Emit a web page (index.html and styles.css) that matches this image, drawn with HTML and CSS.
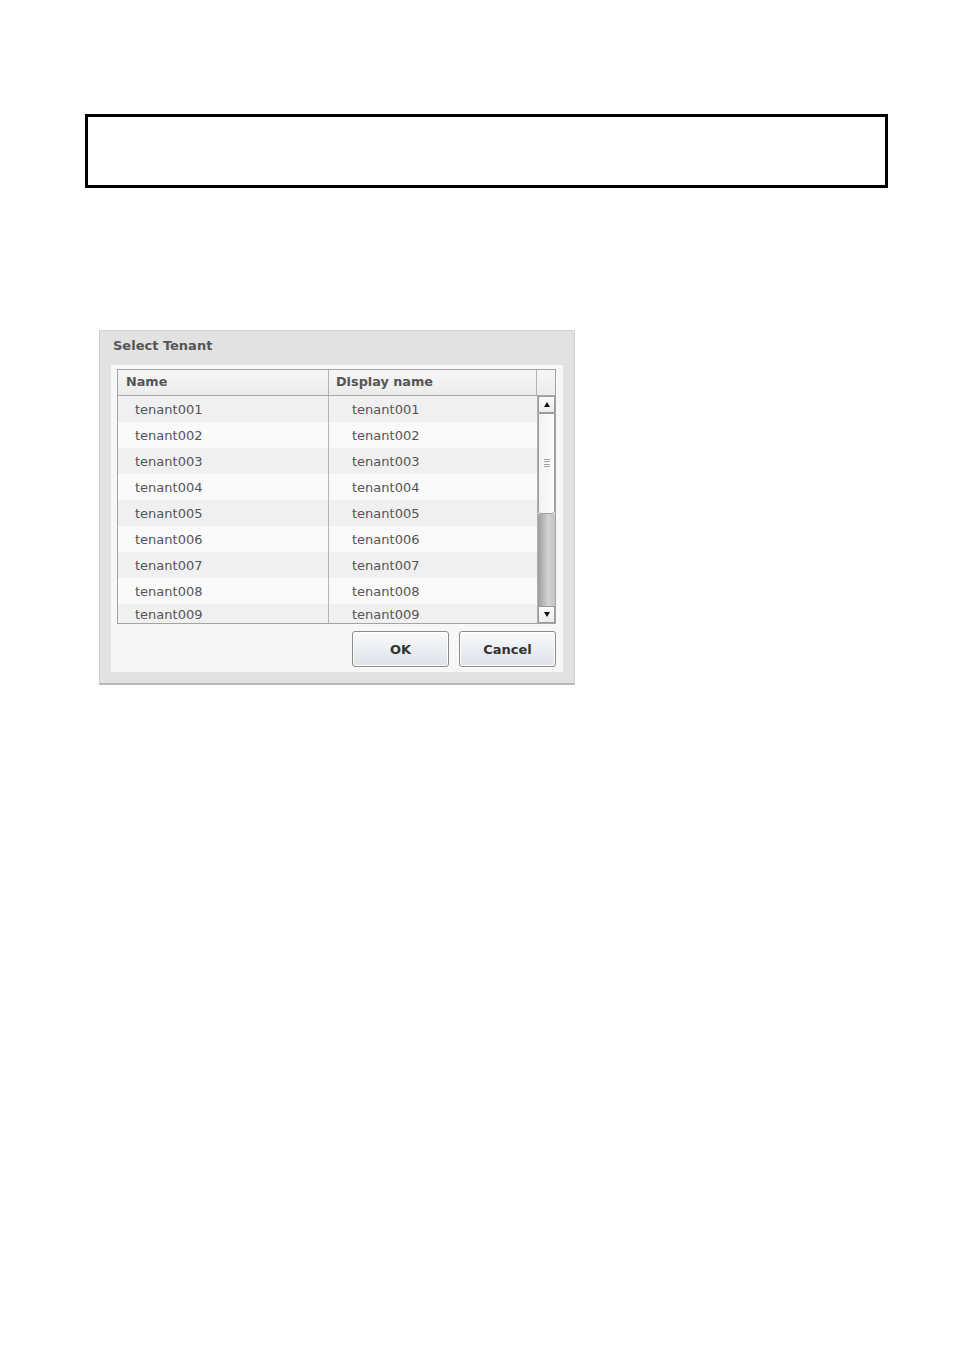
FILE: index.html
```html
<!DOCTYPE html>
<html>
<head>
<meta charset="utf-8">
<link rel="stylesheet" href="styles.css">
</head>
<body>
<div class="note-box"></div>
<div class="dialog">
  <div class="dialog-title">Select Tenant</div>
  <div class="dialog-panel">
    <div class="table">
      <div class="thead">
        <div class="th th-name">Name</div>
        <div class="th th-disp">Display name</div>
        <div class="th th-corner"></div>
      </div>
      <div class="tbody">
        <div class="rows">
          <div class="row odd"><div class="c1">tenant001</div><div class="c2">tenant001</div></div>
          <div class="row"><div class="c1">tenant002</div><div class="c2">tenant002</div></div>
          <div class="row odd"><div class="c1">tenant003</div><div class="c2">tenant003</div></div>
          <div class="row"><div class="c1">tenant004</div><div class="c2">tenant004</div></div>
          <div class="row odd"><div class="c1">tenant005</div><div class="c2">tenant005</div></div>
          <div class="row"><div class="c1">tenant006</div><div class="c2">tenant006</div></div>
          <div class="row odd"><div class="c1">tenant007</div><div class="c2">tenant007</div></div>
          <div class="row"><div class="c1">tenant008</div><div class="c2">tenant008</div></div>
          <div class="row odd last"><div class="c1">tenant009</div><div class="c2">tenant009</div></div>
        </div>
        <div class="scrollbar">
          <div class="sb-btn"><span class="arrow-up"></span></div>
          <div class="sb-thumb"><span class="grip"></span></div>
          <div class="sb-track"></div>
          <div class="sb-btn"><span class="arrow-down"></span></div>
        </div>
      </div>
    </div>
    <div class="buttons">
      <button class="btn">OK</button>
      <button class="btn">Cancel</button>
    </div>
  </div>
</div>
</body>
</html>
```

FILE: styles.css
```css
html, body {
  margin: 0;
  padding: 0;
  background: #fff;
}
body {
  font-family: "DejaVu Sans", "Liberation Sans", sans-serif;
  padding-top: 114px;
}
.note-box {
  margin-left: 85px;
  width: 797px;
  height: 68px;
  border: 3px solid #000;
}
.dialog {
  margin-top: 142px;
  margin-left: 99px;
  width: 474px;
  height: 352px;
  background: #e2e2e2;
  border: 1px solid #d4d4d4;
  border-left-color: #c8ccd8;
  border-bottom: 2px solid #b8b8b8;
  display: flex;
  flex-direction: column;
}
.dialog-title {
  height: 34px;
  line-height: 29px;
  padding-left: 13px;
  font-size: 13px;
  font-weight: bold;
  color: #555;
  box-sizing: border-box;
}
.dialog-panel {
  margin: 0 11px 0 11px;
  height: 307px;
  background: #f7f7f7;
  border-top: 1px solid #fafafa;
  box-sizing: border-box;
  padding: 3px 7px 0 6px;
  display: flex;
  flex-direction: column;
}
.table {
  width: 439px;
  height: 255px;
  border: 1px solid #a4a4a4;
  box-sizing: border-box;
  display: flex;
  flex-direction: column;
  background: #fafafa;
}
.thead {
  display: grid;
  grid-template-columns: 211px 208px 18px;
  height: 26px;
  box-sizing: border-box;
  border-bottom: 1px solid #a8a8a8;
  background: linear-gradient(#f6f6f6, #ececec);
}
.th {
  font-size: 12.8px;
  font-weight: bold;
  color: #555;
  line-height: 24px;
}
.th-name {
  padding-left: 8px;
  border-right: 1px solid #b4b4b4;
}
.th-disp {
  padding-left: 7px;
  border-right: 1px solid #b4b4b4;
}
.tbody {
  display: flex;
  height: 227px;
}
.rows {
  width: 419px;
  height: 227px;
  overflow: hidden;
}
.row {
  display: grid;
  grid-template-columns: 211px 208px;
  height: 26px;
  background: #fafafa;
  font-size: 13px;
  color: #555;
  line-height: 28px;
}
.row.odd {
  background: #f0f0f0;
}
.row.last {
  height: 19px;
  line-height: 22px;
}
.c1 {
  padding-left: 17px;
  border-right: 1px solid #b4b4b4;
}
.c2 {
  padding-left: 23px;
}
.scrollbar {
  width: 18px;
  display: flex;
  flex-direction: column;
  border-left: 1px solid #b0b0b0;
  box-sizing: border-box;
  background: #f4f4f4;
}
.sb-btn {
  height: 17px;
  box-sizing: border-box;
  border: 1px solid #9a9a9a;
  background: linear-gradient(#fbfbfb, #ececec);
  display: flex;
  align-items: center;
  justify-content: center;
}
.arrow-up {
  width: 0;
  height: 0;
  border-left: 3.5px solid transparent;
  border-right: 3.5px solid transparent;
  border-bottom: 5px solid #111;
}
.arrow-down {
  width: 0;
  height: 0;
  border-left: 3.5px solid transparent;
  border-right: 3.5px solid transparent;
  border-top: 5px solid #111;
}
.sb-thumb {
  height: 101px;
  box-sizing: border-box;
  border: 1px solid #9c9c9c;
  border-radius: 0 0 3px 3px;
  background: linear-gradient(90deg, #f2f2f2, #fdfdfd);
  display: flex;
  align-items: center;
  justify-content: center;
}
.grip {
  width: 6px;
  height: 9px;
  background: repeating-linear-gradient(#a0a0a0 0 1px, transparent 1px 2.5px);
}
.sb-track {
  flex: 1;
  background: linear-gradient(90deg, #9c9c9c, #d4d4d4 60%, #c4c4c4);
}
.buttons {
  display: flex;
  justify-content: flex-end;
  gap: 10px;
  margin-top: 7px;
  width: 439px;
}
.btn {
  width: 97px;
  height: 36px;
  border: 1px solid #8c8c8c;
  border-radius: 3px;
  background: linear-gradient(#fafafa, #e9edf2 55%, #dde3ea);
  font-family: "DejaVu Sans", "Liberation Sans", sans-serif;
  font-size: 13px;
  font-weight: bold;
  color: #333;
  padding: 0;
  box-shadow: inset 0 0 0 1px #fff;
}
```
